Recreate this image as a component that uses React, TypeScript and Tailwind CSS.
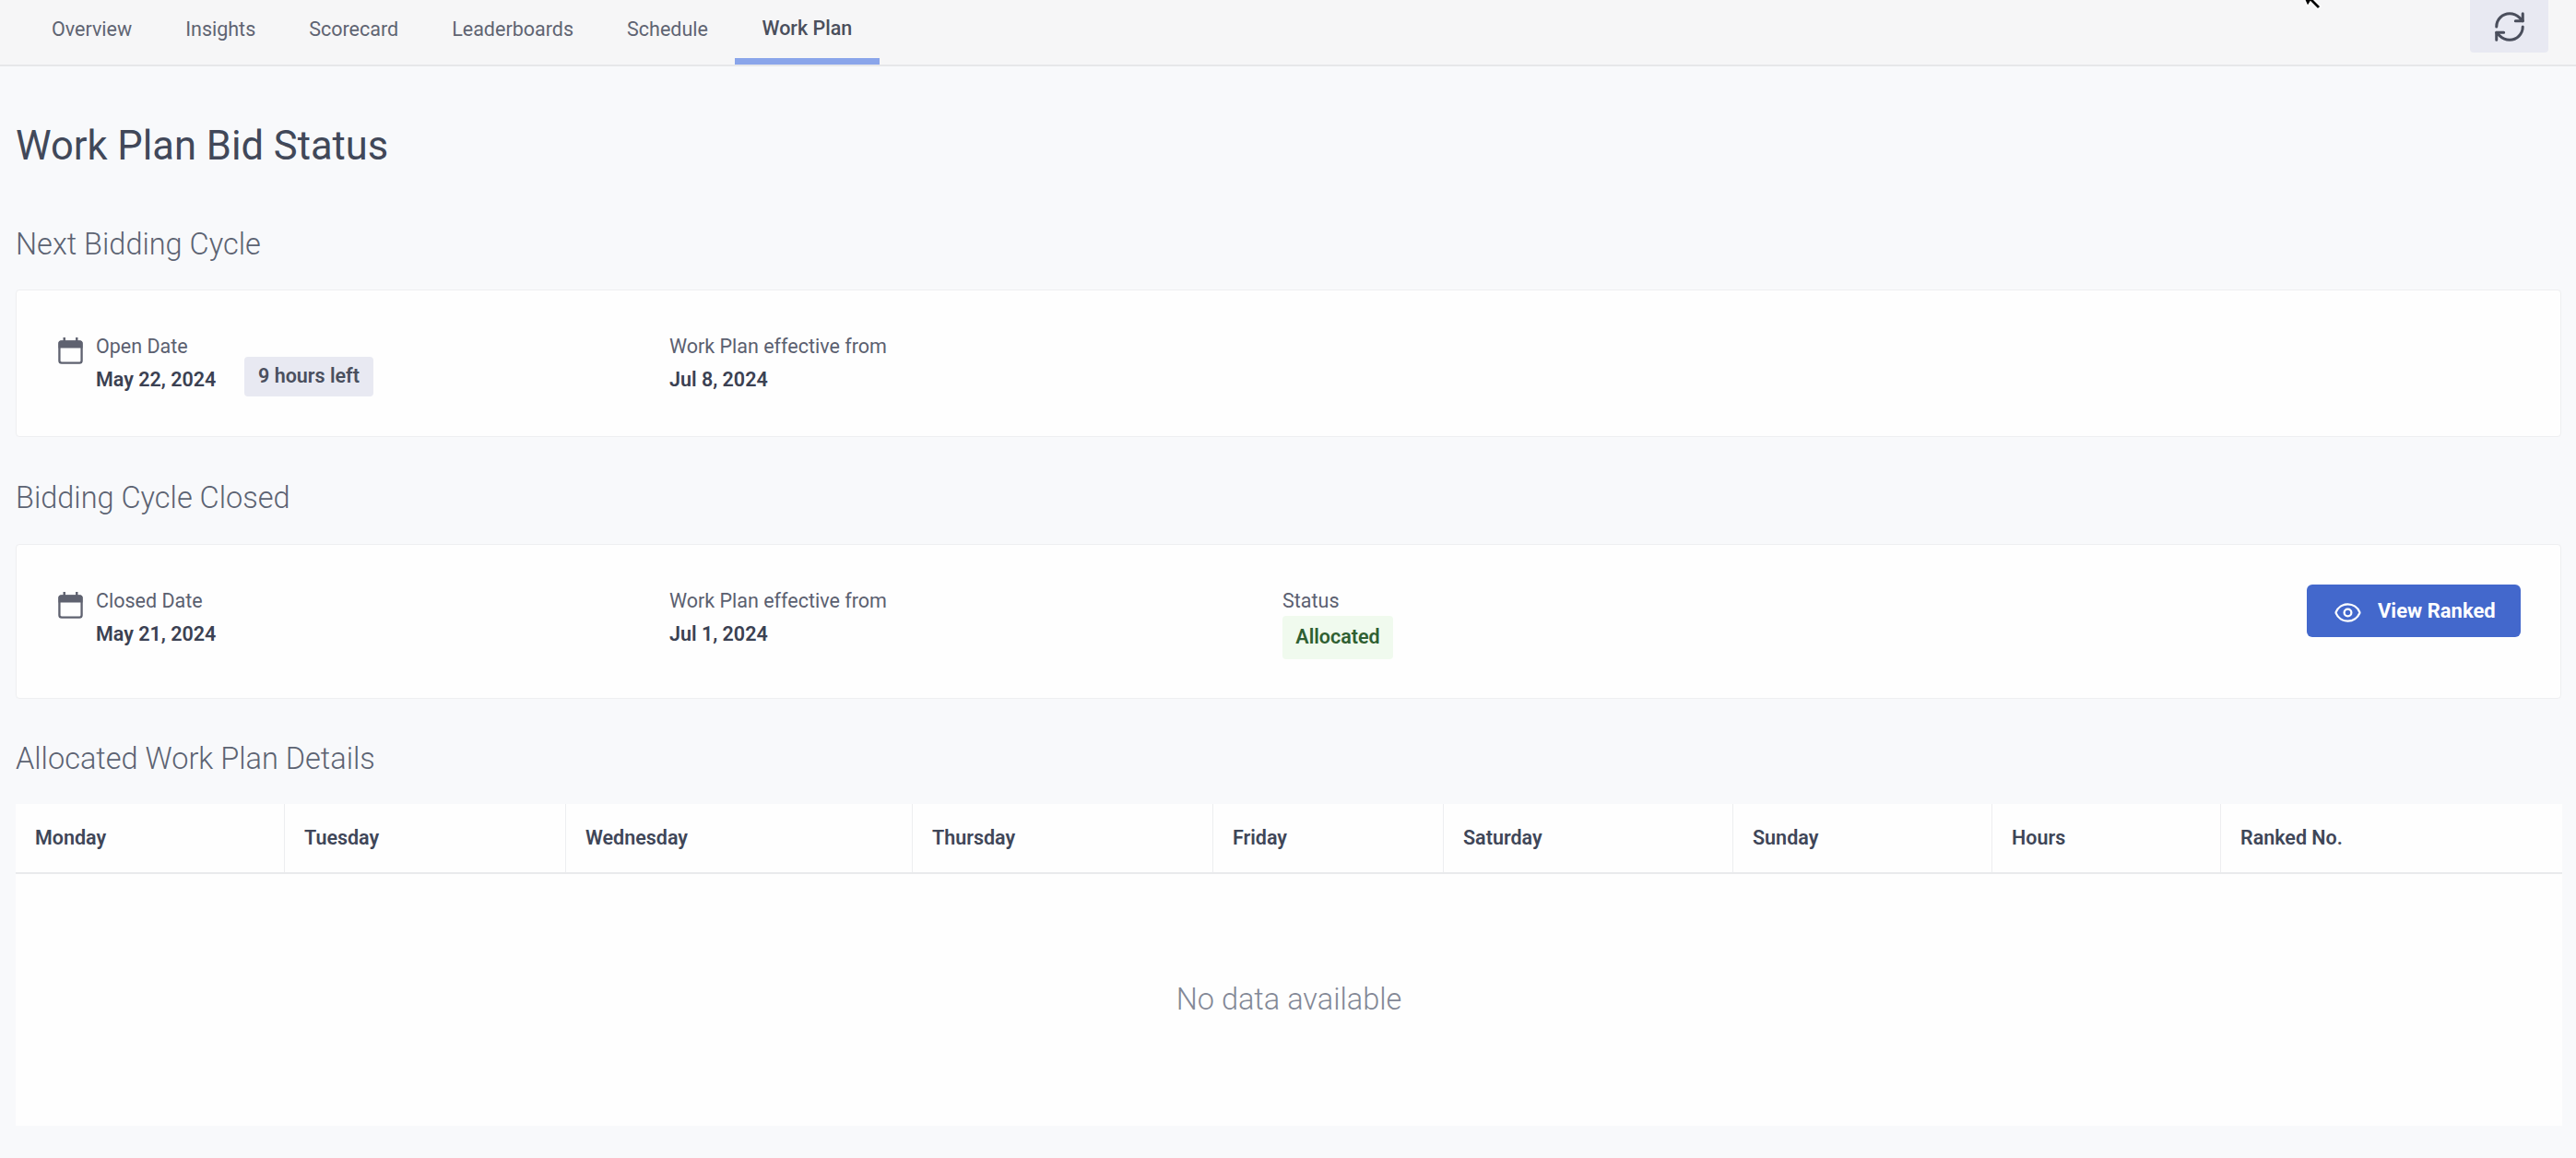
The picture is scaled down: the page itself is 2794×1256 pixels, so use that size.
import { Eye, RefreshCw } from "lucide-react";

const tabs = ["Overview", "Insights", "Scorecard", "Leaderboards", "Schedule"];

const columns = ["Monday", "Tuesday", "Wednesday", "Thursday", "Friday", "Saturday", "Sunday", "Hours", "Ranked No."];

function CalendarIcon() {
  return (
    <svg width="29" height="29" viewBox="0 0 30 30" className="mt-[2px] shrink-0 text-[#5f6270]" fill="none">
      <path d="M8 0v5M22 0v5" stroke="currentColor" strokeWidth="2.5" />
      <path d="M4 3.5h22a2.5 2.5 0 0 1 2.5 2.5v6h-27V6A2.5 2.5 0 0 1 4 3.5z" fill="currentColor" />
      <rect x="2.5" y="4.5" width="25" height="24" rx="2.5" stroke="currentColor" strokeWidth="2.4" />
    </svg>
  );
}

function Field({ label, value }: { label: string; value: string }) {
  return (
    <div className="flex flex-col">
      <span className="text-[21.5px] leading-[24px] text-[#5b6070]">{label}</span>
      <span className="mt-[12px] text-[21.5px] leading-[24px] font-semibold text-[#3b4152]">{value}</span>
    </div>
  );
}

function Heading({ children }: { children: string }) {
  return <h2 className="text-[32.5px] leading-[40px] font-light text-[#5c6372]">{children}</h2>;
}

export default function App() {
  return (
    <div className="relative h-[1256px] w-[2794px] overflow-hidden bg-[#f8f9fb] font-['Roboto',sans-serif]">
      <header className="flex h-[72px] items-start justify-between border-b-2 border-[#e6e7e9] bg-[#f6f6f7] pr-[30px]">
        <nav className="flex pl-[27px]">
          {tabs.map((tab) => (
            <div key={tab} className="flex h-[70px] items-center px-[29px] pb-[6px] text-[21.5px] text-[#5f6472]">
              {tab}
            </div>
          ))}
          <div className="flex h-[70px] w-[157px] items-center justify-center border-b-[7px] border-[#8aa5ea] text-[21.5px] font-medium text-[#4a4f5c]">
            Work Plan
          </div>
        </nav>
        <button className="flex h-[57px] w-[85px] items-center justify-center rounded-b-[4px] bg-[#e8e9f2] text-[#4a4e5c]">
          <RefreshCw size={38} strokeWidth={1.9} />
        </button>
      </header>

      <svg width="22" height="16" viewBox="0 0 22 16" className="absolute top-0 left-[2496px]">
        <path d="M1 -6l6 13 3-5 8 8 3-3-8-8 2-5z" fill="#000" stroke="#fff" strokeWidth="1.5" />
      </svg>

      <main className="px-[17px]">
        <h1 className="mt-[62px] text-[43.5px] leading-[50px] font-normal text-[#414859]">Work Plan Bid Status</h1>

        <div className="mt-[61px]">
          <Heading>Next Bidding Cycle</Heading>
        </div>
        <section className="mt-[29px] flex h-[160px] w-[2761px] items-start rounded-[4px] border border-[#eeeff1] bg-[#fefefe] pt-[49px] pl-[44px]">
          <CalendarIcon />
          <div className="ml-[13px] w-[161px]">
            <Field label="Open Date" value="May 22, 2024" />
          </div>
          <span className="mt-[23px] flex h-[43px] w-[140px] items-center justify-center rounded-[4px] bg-[#e8e9f2] text-[21.5px] font-semibold text-[#4a4f5e]">
            9 hours left
          </span>
          <div className="ml-[321px]">
            <Field label="Work Plan effective from" value="Jul 8, 2024" />
          </div>
        </section>

        <div className="mt-[46px]">
          <Heading>Bidding Cycle Closed</Heading>
        </div>
        <section className="mt-[30px] flex h-[168px] w-[2761px] items-start rounded-[4px] border border-[#eeeff1] bg-[#fefefe] pt-[49px] pr-[43px] pl-[44px]">
          <CalendarIcon />
          <div className="ml-[13px] w-[622px]">
            <Field label="Closed Date" value="May 21, 2024" />
          </div>
          <div className="w-[665px]">
            <Field label="Work Plan effective from" value="Jul 1, 2024" />
          </div>
          <div className="flex flex-col items-start">
            <span className="text-[21.5px] leading-[24px] text-[#5b6070]">Status</span>
            <span className="mt-[4px] flex h-[47px] w-[120px] items-center justify-center rounded-[4px] bg-[#f0faee] text-[21.5px] font-semibold text-[#2f5f32]">
              Allocated
            </span>
          </div>
          <button className="-mt-[6px] ml-auto flex h-[57px] w-[232px] items-center rounded-[6px] bg-[#4368cc] pl-[29px] text-[22px] font-bold text-white">
            <Eye size={31} strokeWidth={1.75} className="mt-[3px]" />
            <span className="ml-[17px]">View Ranked</span>
          </button>
        </section>

        <div className="mt-[45px]">
          <Heading>Allocated Work Plan Details</Heading>
        </div>
        <section className="mt-[29px] w-[2762px] bg-[#fefefe]">
          <div className="grid h-[76px] grid-cols-[291px_305px_376px_326px_250px_314px_281px_248px_1fr] border-b-2 border-[#e9eaec]">
            {columns.map((col, i) => (
              <div
                key={col}
                className={`flex items-center pl-[21px] text-[21.5px] font-semibold text-[#3f4658] ${
                  i > 0 ? "border-l border-[#edeef0]" : ""
                }`}
              >
                {col}
              </div>
            ))}
          </div>
          <div className="flex h-[273px] items-center justify-center text-[32.5px] font-light text-[#838896]">
            No data available
          </div>
        </section>
      </main>
    </div>
  );
}
